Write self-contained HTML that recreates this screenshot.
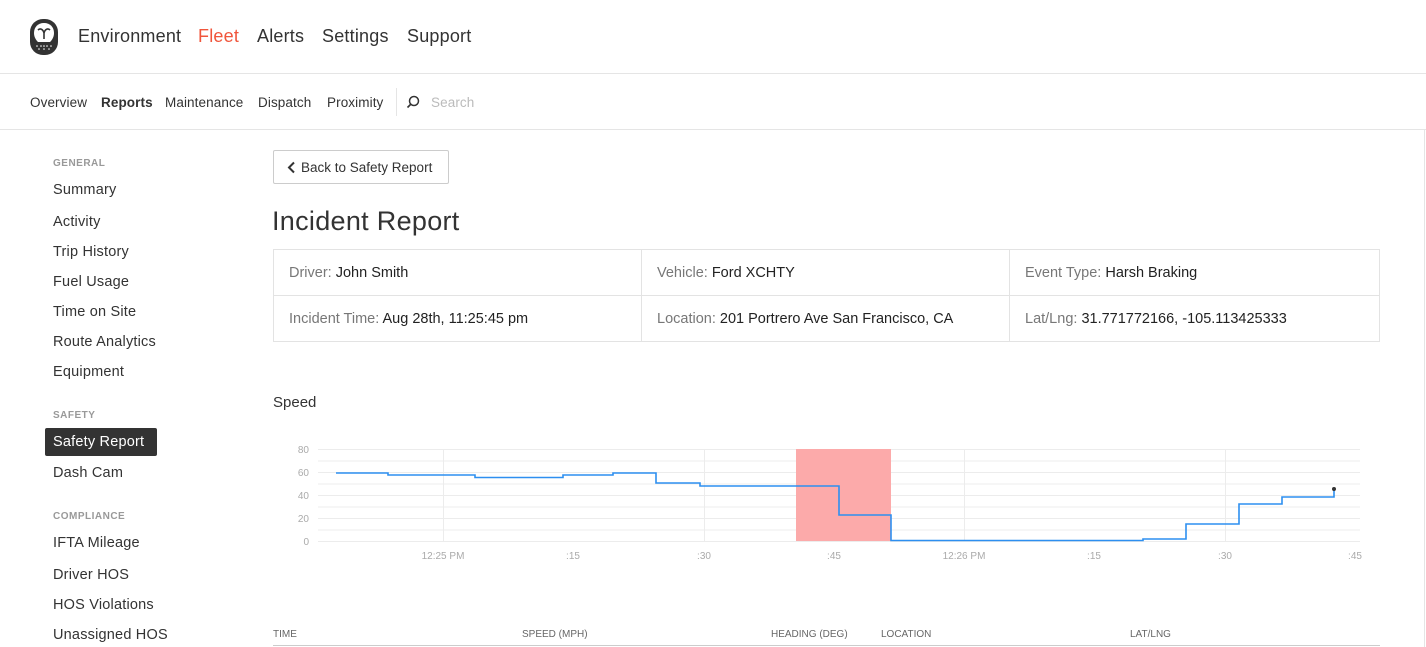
<!DOCTYPE html>
<html><head><meta charset="utf-8"><style>
*{box-sizing:border-box;margin:0;padding:0}
body{width:1426px;height:647px;overflow:hidden;background:#fff;font-family:"Liberation Sans",sans-serif;color:#333;position:relative}
.a{position:absolute;white-space:nowrap}
.top{font-size:18px;top:26px;color:#333;letter-spacing:.2px}
.sub{font-size:13.5px;top:95px;color:#333;letter-spacing:.1px}
.sb{font-size:14.5px;left:53px;color:#333;letter-spacing:.2px}
.hd{font-size:10px;left:53px;color:#999;font-weight:bold;letter-spacing:.5px}
.lbl{color:#777}
.cell{font-size:14.5px;color:#222}
.th{font-size:10px;color:#666;top:629px}
</style></head><body>
<div class="a" style="left:0;top:73px;width:1426px;height:1px;background:#e5e5e5"></div>
<div class="a" style="left:0;top:129px;width:1426px;height:1px;background:#e5e5e5"></div>
<div class="a" style="left:1424px;top:130px;width:1px;height:517px;background:#e5e5e5"></div>
<svg class="a" style="left:29px;top:18px" width="30" height="38" viewBox="0 0 30 38"><rect x="1" y="1" width="28" height="36" rx="13" fill="#333"/><path d="M15 5c6 0 10 4 10 10 0 4-2 7-4 9H9c-2-2-4-5-4-9 0-6 4-10 10-10z" fill="#fff"/><path d="M9 12c2-2 5-1 6 3 1-4 4-5 6-3M15 15v6" stroke="#333" stroke-width="1.6" fill="none"/><g fill="#fff"><circle cx="8" cy="28" r=".8"/><circle cx="12" cy="28" r=".8"/><circle cx="15" cy="28" r=".8"/><circle cx="18" cy="28" r=".8"/><circle cx="22" cy="28" r=".8"/><circle cx="10" cy="31" r=".8"/><circle cx="15" cy="31" r=".8"/><circle cx="20" cy="31" r=".8"/></g></svg>
<div class="a top" style="left:78px">Environment</div>
<div class="a top" style="left:198px;color:#f0553b">Fleet</div>
<div class="a top" style="left:257px">Alerts</div>
<div class="a top" style="left:322px">Settings</div>
<div class="a top" style="left:407px">Support</div>
<div class="a sub" style="left:30px">Overview</div>
<div class="a sub" style="left:101px;font-weight:bold">Reports</div>
<div class="a sub" style="left:165px">Maintenance</div>
<div class="a sub" style="left:258px">Dispatch</div>
<div class="a sub" style="left:327px">Proximity</div>
<div class="a" style="left:396px;top:88px;width:1px;height:28px;background:#e5e5e5"></div>
<svg class="a" style="left:406px;top:95px" width="14" height="14"><circle cx="8" cy="6" r="4.5" stroke="#333" stroke-width="1.5" fill="none"/><path d="M5 9L1.5 12.5" stroke="#333" stroke-width="1.6"/></svg>
<div class="a sub" style="left:431px;color:#bbb">Search</div>

<div class="a hd" style="top:158px">GENERAL</div>
<div class="a sb" style="top:182px">Summary</div>
<div class="a sb" style="top:214px">Activity</div>
<div class="a sb" style="top:244px">Trip History</div>
<div class="a sb" style="top:274px">Fuel Usage</div>
<div class="a sb" style="top:304px">Time on Site</div>
<div class="a sb" style="top:334px">Route Analytics</div>
<div class="a sb" style="top:364px">Equipment</div>
<div class="a hd" style="top:410px">SAFETY</div>
<div class="a" style="left:45px;top:428px;width:112px;height:28px;background:#333;border-radius:2px"></div>
<div class="a sb" style="top:434px;color:#fff">Safety Report</div>
<div class="a sb" style="top:465px">Dash Cam</div>
<div class="a hd" style="top:511px">COMPLIANCE</div>
<div class="a sb" style="top:535px">IFTA Mileage</div>
<div class="a sb" style="top:567px">Driver HOS</div>
<div class="a sb" style="top:597px">HOS Violations</div>
<div class="a sb" style="top:627px">Unassigned HOS</div>

<div class="a" style="left:273px;top:150px;width:176px;height:34px;border:1px solid #ccc;border-radius:2px"></div>
<svg class="a" style="left:287px;top:161px" width="9" height="13"><path d="M7 1.5L2 6.5l5 5" stroke="#333" stroke-width="2" fill="none"/></svg>
<div class="a" style="left:301px;top:160px;font-size:13.5px;color:#333">Back to Safety Report</div>
<div class="a" style="left:272px;top:206px;font-size:27px;color:#333;letter-spacing:.3px">Incident Report</div>

<div class="a" style="left:273px;top:249px;width:1107px;height:93px;border:1px solid #e3e3e3"></div>
<div class="a" style="left:273px;top:295px;width:1107px;height:1px;background:#e3e3e3"></div>
<div class="a" style="left:641px;top:249px;width:1px;height:93px;background:#e3e3e3"></div>
<div class="a" style="left:1009px;top:249px;width:1px;height:93px;background:#e3e3e3"></div>
<div class="a cell" style="left:289px;top:265px"><span class="lbl">Driver:</span> John Smith</div>
<div class="a cell" style="left:657px;top:265px"><span class="lbl">Vehicle:</span> Ford XCHTY</div>
<div class="a cell" style="left:1025px;top:265px"><span class="lbl">Event Type:</span> Harsh Braking</div>
<div class="a cell" style="left:289px;top:311px"><span class="lbl">Incident Time:</span> Aug 28th, 11:25:45 pm</div>
<div class="a cell" style="left:657px;top:311px"><span class="lbl">Location:</span> 201 Portrero Ave San Francisco, CA</div>
<div class="a cell" style="left:1025px;top:311px"><span class="lbl">Lat/Lng:</span> 31.771772166, -105.113425333</div>

<div class="a" style="left:273px;top:394px;font-size:15px;color:#333">Speed</div>
<svg class="a" style="left:0;top:0" width="1426" height="647">
<g stroke="#ececec" stroke-width="1">
<path d="M318 449.5H1360M318 461H1360M318 472.5H1360M318 484H1360M318 495.5H1360M318 507H1360M318 518.5H1360M318 530H1360M318 541.5H1360"/>
<path d="M443.5 449V541M704.5 449V541M964.5 449V541M1225.5 449V541"/>
</g>
<rect x="796" y="449" width="95" height="92" fill="#fcaaaa"/>
<path d="M336 473H388V475H475V477.5H563V475H613V473H656V483H700V486H839V515H891V540.5H1143V539H1186V524H1239V504H1282V497H1334V489" stroke="#2d8ff0" stroke-width="1.6" fill="none"/>
<circle cx="1334" cy="489" r="2" fill="#333"/>
<g font-family="Liberation Sans" font-size="10" fill="#aaa" text-anchor="end">
<text x="309" y="453">80</text><text x="309" y="476">60</text><text x="309" y="499">40</text><text x="309" y="522">20</text><text x="309" y="545">0</text></g>
<g font-family="Liberation Sans" font-size="10" fill="#aaa" text-anchor="middle">
<text x="443" y="559">12:25 PM</text><text x="573" y="559">:15</text><text x="704" y="559">:30</text><text x="834" y="559">:45</text><text x="964" y="559">12:26 PM</text><text x="1094" y="559">:15</text><text x="1225" y="559">:30</text><text x="1355" y="559">:45</text></g>
</svg>
<div class="a th" style="left:273px">TIME</div>
<div class="a th" style="left:522px">SPEED (MPH)</div>
<div class="a th" style="left:771px">HEADING (DEG)</div>
<div class="a th" style="left:881px">LOCATION</div>
<div class="a th" style="left:1130px">LAT/LNG</div>
<div class="a" style="left:273px;top:645px;width:1107px;height:1px;background:#ccc"></div>
</body></html>
